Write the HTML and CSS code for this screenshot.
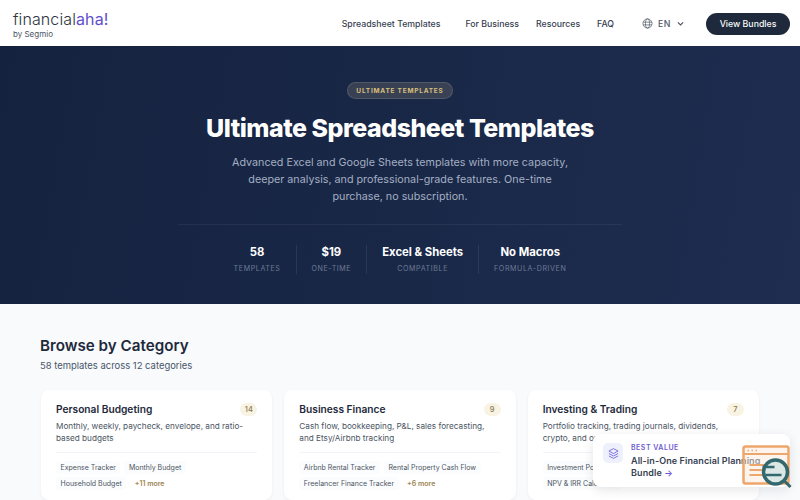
FILE: index.html
```html
<!DOCTYPE html>
<html lang="en">
<head>
    <meta charset="UTF-8">
    <meta name="viewport" content="width=device-width, initial-scale=1.0">
    <title>Ultimate Spreadsheet Templates</title>
    <link rel="stylesheet" href="styles.css">
</head>
<body>
    <header class="site-header">
        <div class="logo">
            <p class="logo-name">financial<span class="logo-aha">aha!</span></p>
            <p class="logo-by">by Segmio</p>
        </div>
        <nav class="site-nav">
            <a class="nav-link nav-link-wide" href="#">Spreadsheet Templates</a>
            <a class="nav-link" href="#">For Business</a>
            <a class="nav-link" href="#">Resources</a>
            <a class="nav-link" href="#">FAQ</a>
            <div class="lang">
                <svg class="lang-globe" viewBox="0 0 24 24" fill="none" stroke="currentColor" stroke-width="1.5">
                    <circle cx="12" cy="12" r="10"/>
                    <ellipse cx="12" cy="12" rx="4.5" ry="10"/>
                    <path d="M2.5 9h19M2.5 15h19"/>
                </svg>
                <span>EN</span>
                <svg class="lang-caret" viewBox="0 0 12 12" fill="none" stroke="currentColor" stroke-width="1.5">
                    <path d="M2.5 4.5 6 8l3.5-3.5"/>
                </svg>
            </div>
            <a class="nav-button" href="#">View Bundles</a>
        </nav>
    </header>

    <section class="hero">
        <span class="hero-badge">ULTIMATE TEMPLATES</span>
        <h1>Ultimate Spreadsheet Templates</h1>
        <p class="hero-text">Advanced Excel and Google Sheets templates with more capacity, deeper analysis, and professional-grade features. One-time purchase, no subscription.</p>
        <div class="hero-stats">
            <div class="stat">
                <strong>58</strong>
                <span>TEMPLATES</span>
            </div>
            <div class="stat">
                <strong>$19</strong>
                <span>ONE-TIME</span>
            </div>
            <div class="stat">
                <strong>Excel &amp; Sheets</strong>
                <span>COMPATIBLE</span>
            </div>
            <div class="stat">
                <strong>No Macros</strong>
                <span>FORMULA-DRIVEN</span>
            </div>
        </div>
    </section>

    <main class="browse">
        <h2>Browse by Category</h2>
        <p class="browse-count">58 templates across 12 categories</p>
        <div class="cards">
            <article class="card">
                <div class="card-head">
                    <h3>Personal Budgeting</h3>
                    <span class="card-count">14</span>
                </div>
                <p class="card-text">Monthly, weekly, paycheck, envelope, and ratio-based budgets</p>
                <div class="tags">
                    <span class="tag">Expense Tracker</span>
                    <span class="tag">Monthly Budget</span>
                    <span class="tag">Household Budget</span>
                    <span class="tag tag-more">+11 more</span>
                </div>
            </article>
            <article class="card">
                <div class="card-head">
                    <h3>Business Finance</h3>
                    <span class="card-count">9</span>
                </div>
                <p class="card-text">Cash flow, bookkeeping, P&amp;L, sales forecasting, and Etsy/Airbnb tracking</p>
                <div class="tags">
                    <span class="tag">Airbnb Rental Tracker</span>
                    <span class="tag">Rental Property Cash Flow</span>
                    <span class="tag">Freelancer Finance Tracker</span>
                    <span class="tag tag-more">+6 more</span>
                </div>
            </article>
            <article class="card">
                <div class="card-head">
                    <h3>Investing &amp; Trading</h3>
                    <span class="card-count">7</span>
                </div>
                <p class="card-text">Portfolio tracking, trading journals, dividends, crypto, and options analysis</p>
                <div class="tags">
                    <span class="tag">Investment Portfolio</span>
                    <span class="tag">Dividend Tracker</span>
                    <span class="tag">NPV &amp; IRR Calculator</span>
                    <span class="tag tag-more">+4 more</span>
                </div>
            </article>
        </div>
    </main>

    <aside class="promo">
        <div class="promo-icon">
            <svg viewBox="0 0 24 24" fill="none" stroke="currentColor" stroke-width="1.8" stroke-linejoin="round">
                <path d="M12 3 3.5 7.5 12 12l8.500-4.500z"/>
                <path d="M3.500 12 12 16.500 20.500 12"/>
                <path d="M3.500 16.500 12 21l8.500-4.500"/>
            </svg>
        </div>
        <div>
            <p class="promo-label">BEST VALUE</p>
            <p class="promo-title">All-in-One Financial Planning Bundle <span class="promo-arrow">→</span></p>
        </div>
    </aside>

    <svg class="help-widget" viewBox="0 0 50 46" fill="none">
        <rect x="2" y="1.500" width="45" height="37" rx="2" fill="#fbeadb" fill-opacity=".5" stroke="#eda66c" stroke-width="2.500"/>
        <path d="M2 9h45" stroke="#eda66c" stroke-width="2"/>
        <path d="M6 5.500h1.500M10 5.500h1.500M14 5.500h1.500" stroke="#eda66c" stroke-width="1.500"/>
        <path d="M8 20h16M8 25h18M8 30h14" stroke="#eda66c" stroke-width="2"/>
        <circle cx="34" cy="27" r="12" fill="#dbe8e6" stroke="#33696e" stroke-width="3.500"/>
        <path d="M21 22h12M24 30h16" stroke="#33696e" stroke-width="2.500"/>
        <path d="M43 36l6 6" stroke="#33696e" stroke-width="3"/>
    </svg>
</body>
</html>
```

FILE: styles.css
```css
* {
    margin: 0;
    box-sizing: border-box;
}
html, body {
    width: 100%;
    height: 100vh;
}
body {
    position: relative;
    overflow: hidden;
    font-family: Inter, "Liberation Sans", sans-serif;
    background-color: #f8fafc;
    color: #1e293b;
}
a {
    text-decoration: none;
    color: inherit;
}

.site-header {
    height: 46px;
    display: flex;
    justify-content: space-between;
    align-items: center;
    padding: 3px 10px 0 13px;
    background-color: white;
}
.logo-name {
    font-size: 16px;
    line-height: 17px;
    font-weight: 300;
    letter-spacing: 0.1px;
    color: #2d3340;
}
.logo-aha {
    font-weight: 400;
    color: #5f50c9;
}
.logo-by {
    margin-top: 1px;
    font-size: 8px;
    line-height: 10px;
    color: #4b5563;
}
.site-nav {
    display: flex;
    align-items: center;
    margin-top: -2px;
    font-size: 8.75px;
    font-weight: 500;
    color: #374151;
}
.nav-link {
    margin-right: 17px;
}
.nav-link-wide {
    margin-right: 25px;
}
.lang {
    display: flex;
    align-items: center;
    gap: 5px;
    margin: 0 21px 0 11px;
    color: #4b5563;
    letter-spacing: 0.5px;
}
.lang-globe {
    width: 11px;
    height: 11px;
}
.lang-caret {
    width: 9px;
    height: 9px;
}
.nav-button {
    width: 84px;
    height: 22px;
    display: flex;
    justify-content: center;
    align-items: center;
    border-radius: 11px;
    background-color: #1e293b;
    color: #f8fafc;
}

.hero {
    height: 258px;
    display: flex;
    flex-direction: column;
    align-items: center;
    padding-top: 36px;
    background-image: linear-gradient(100deg, #15223f, #1e2d50);
    color: white;
}
.hero-badge {
    height: 17px;
    display: flex;
    align-items: center;
    padding: 0 8.5px;
    border: 1px solid rgba(255, 255, 255, 0.12);
    border-radius: 9px;
    background-color: rgba(212, 196, 150, 0.17);
    color: #d8bf7e;
    font-size: 6.5px;
    font-weight: 700;
    letter-spacing: 0.78px;
}
.hero h1 {
    margin-top: 13px;
    font-size: 25px;
    line-height: 32px;
    font-weight: 800;
    letter-spacing: -0.5px;
}
.hero-text {
    width: 350px;
    margin-top: 10px;
    font-size: 10.75px;
    line-height: 17px;
    text-align: center;
    color: #a3afc2;
}
.hero-stats {
    width: 444px;
    display: flex;
    justify-content: center;
    margin-top: 19px;
    padding-top: 20px;
    border-top: 1px solid rgba(255, 255, 255, 0.06);
}
.stat {
    display: flex;
    flex-direction: column;
    align-items: center;
    gap: 4px;
    padding: 0 15px;
    border-right: 1px solid rgba(255, 255, 255, 0.08);
}
.stat:last-child {
    border-right: none;
}
.stat strong {
    font-size: 11.3px;
    line-height: 15px;
    font-weight: 700;
}
.stat span {
    font-size: 7.1px;
    line-height: 10px;
    letter-spacing: 0.6px;
    color: #6b7a94;
}

.browse {
    padding: 32px 41px 0 40px;
}
.browse h2 {
    font-size: 15.2px;
    line-height: 20px;
    font-weight: 600;
}
.browse-count {
    margin-top: 3px;
    font-size: 9.45px;
    line-height: 14px;
    color: #475569;
}
.cards {
    display: grid;
    grid-template-columns: repeat(3, 1fr);
    gap: 12px;
    margin: 17px 0 0 1px;
}
.card {
    height: 110px;
    padding: 12px 15px;
    border-radius: 8px;
    background-color: white;
    box-shadow: 0 1px 3px rgba(15, 23, 42, 0.06);
}
.card-head {
    display: flex;
    justify-content: space-between;
    align-items: center;
}
.card h3 {
    font-size: 10.2px;
    line-height: 14px;
    font-weight: 600;
}
.card-count {
    min-width: 17px;
    height: 13px;
    display: flex;
    justify-content: center;
    align-items: center;
    border-radius: 7px;
    background-color: #f8f3e3;
    color: #8a7a55;
    font-size: 7.5px;
    font-weight: 500;
}
.card-text {
    margin-top: 4px;
    padding-bottom: 8px;
    border-bottom: 1px solid #f1f5f9;
    font-size: 8.2px;
    line-height: 12px;
    color: #4b5563;
}
.tags {
    display: flex;
    flex-wrap: wrap;
    gap: 3.5px 4px;
    margin-top: 8px;
}
.tag {
    height: 12.5px;
    display: flex;
    align-items: center;
    padding: 0 4.5px;
    border-radius: 3px;
    background-color: #fbfcfd;
    color: #4b5563;
    font-size: 7px;
}
.tag-more {
    background: none;
    color: #9c8450;
    font-weight: 600;
}

.promo {
    position: absolute;
    left: 593px;
    top: 434px;
    width: 197px;
    height: 53px;
    display: flex;
    align-items: flex-start;
    gap: 8px;
    padding: 9px 10px;
    border-radius: 8px;
    background-color: white;
    box-shadow: 0 3px 12px rgba(15, 23, 42, 0.1);
}
.promo-icon {
    flex-shrink: 0;
    width: 20px;
    height: 20px;
    display: flex;
    justify-content: center;
    align-items: center;
    border-radius: 5px;
    background-color: #eef0fb;
    color: #7c6fe0;
}
.promo-icon svg {
    width: 13px;
    height: 13px;
}
.promo-label {
    font-size: 7px;
    line-height: 9px;
    font-weight: 600;
    letter-spacing: 0.5px;
    color: #6d5bd0;
}
.promo-title {
    margin-top: 3px;
    font-size: 9px;
    line-height: 11.5px;
    font-weight: 600;
    letter-spacing: 0.1px;
    color: #374151;
}
.promo-arrow {
    color: #6d5bd0;
}
.help-widget {
    position: absolute;
    left: 741px;
    top: 445px;
    width: 51px;
    height: 46px;
}
```
